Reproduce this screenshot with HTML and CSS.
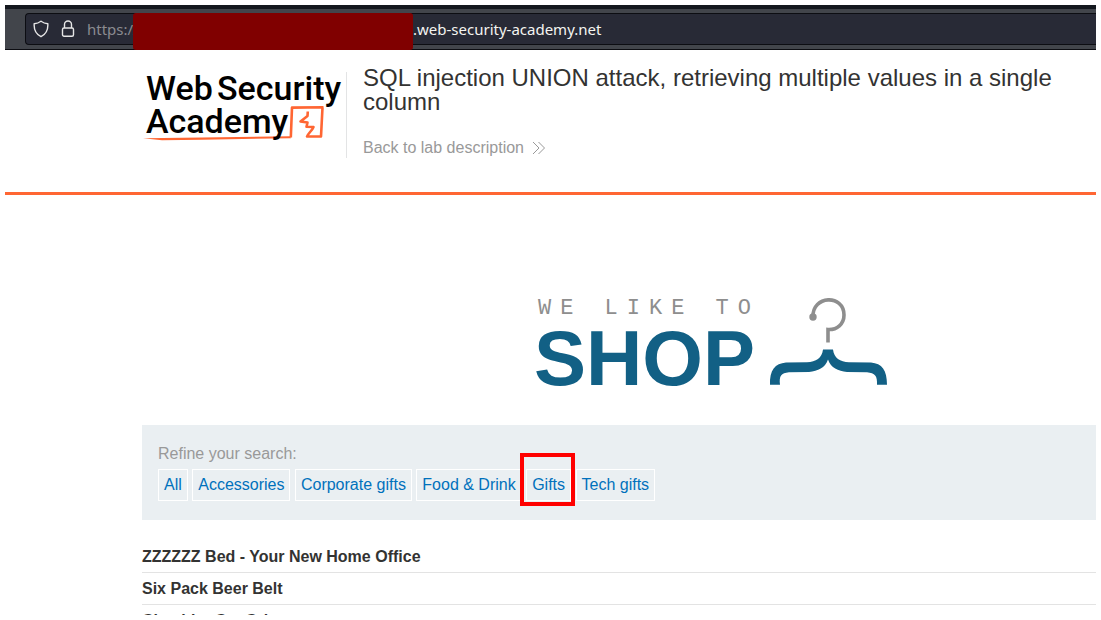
FILE: index.html
```html
<!DOCTYPE html>
<html lang="en">
<head>
<meta charset="utf-8">
<meta name="viewport" content="width=device-width, initial-scale=1">
<title>SQL injection UNION attack</title>
<link rel="stylesheet" href="styles.css">
</head>
<body>
<div class="screen">
  <div class="browser">
    <div class="address">
      <svg class="address-icon" width="16" height="18" viewBox="0 0 16 18" aria-hidden="true"><path d="M8 1.2 C10 2.6 12.3 3.5 14.8 3.8 C15.2 9.5 13 14.200 8 16.600 C3 14.200 .8 9.500 1.200 3.800 C3.700 3.500 6 2.600 8 1.200Z"/></svg>
      <svg class="address-icon" width="14" height="18" viewBox="0 0 14 18" aria-hidden="true"><rect x="1.500" y="8" width="11" height="8.300" rx="1.500"/><path d="M3.500 8V4.500a3.500 3.500 0 0 1 7 0V8"/></svg>
      <label class="scheme" for="url">https://</label>
      <input class="host" id="url" type="text" value=".web-security-academy.net">
      <div class="redaction"></div>
    </div>
  </div>

  <header class="lab-header">
    <div class="lab-row">
      <svg class="academy-logo" width="204" height="86" viewBox="0 0 204 86" role="img" aria-label="Web Security Academy">
        <text class="academy-text" x="4" y="28">Web</text>
        <text class="academy-text" x="75" y="28">Security</text>
        <path class="swipe" d="M1 66.200 L60 65.500 L148 64.200 L149 66.200 L60 67.800 L20 68.200Z"/>
        <path class="mark" d="M148.800 65.500 L150 35.600 L181.500 35.200 M180.500 35.500 L179 64.500 L165 64.500 C165.500 62 170 59 171.500 55 L164.500 54.800 L165.500 50.500 L158.500 49.500 L165.500 44 L165.800 39.500"/>
        <text class="academy-text" x="4" y="61">Academy</text>
      </svg>
      <div class="lab-title">
        <h1>SQL injection UNION attack, retrieving multiple values in a single column</h1>
        <a class="back" href="#">Back to lab description
          <svg width="14" height="14" viewBox="0 0 14 14" aria-hidden="true"><path d="M1 1l6 6-6 6M6.500 1l6 6-6 6"/></svg>
        </a>
      </div>
    </div>
  </header>

  <main class="shop">
    <svg class="shop-logo" width="352" height="92" viewBox="0 0 352 92" role="img" aria-label="We like to shop">
      <text class="shop-small" x="1" y="17">WE LIKE TO</text>
      <text class="shop-big" x="-3" y="88">SHOP</text>
      <circle cx="276" cy="20" r="3.700" fill="#8e8e8e"/>
      <path class="hook" d="M276 20 C275 -2 307 -3 307 18 C307 27 300 33 291 32.500 V45.500"/>
      <path class="hanger" d="M286 52.500 H296 C297 61 303 65 312 65.200 L334 65.500 C345 66.500 350 73 350 87.800 H340 C340.500 79 338 76 330 75.300 L310 75 C301 74 294 71 291 62.500 C288 71 281 74 272 75 L252 75.300 C244 76 242 79 243 87.800 H233 C232.500 73 238 66.500 249 65.500 L270 65.200 C279 65 285 61 286 52.500Z"/>
    </svg>

    <section class="filters">
      <p>Refine your search:</p>
      <nav class="filter-list">
        <a href="#">All</a>
        <a href="#">Accessories</a>
        <a href="#">Corporate gifts</a>
        <a href="#">Food &amp; Drink</a>
        <a class="marked" href="#">Gifts</a>
        <a href="#">Tech gifts</a>
      </nav>
    </section>

    <table class="products">
      <tbody>
        <tr><th scope="row">ZZZZZZ Bed - Your New Home Office</th></tr>
        <tr><th scope="row">Six Pack Beer Belt</th></tr>
        <tr><th scope="row">Cheshire Cat Grin</th></tr>
      </tbody>
    </table>
  </main>
</div>
</body>
</html>
```

FILE: styles.css
```css
* { box-sizing: border-box; }

body {
  margin: 0;
  padding: 5px;
  height: 100vh;
  overflow: hidden;
  background: #fff;
  color: #333332;
  font: 16px/20px "Liberation Sans", Arial, sans-serif;
}

.screen {
  height: 100%;
  overflow: hidden;
}

/* Browser toolbar */
.browser {
  padding: 4px 0 4px 20px;
  background: #42454b;
  border-top: 4px solid #14181e;
  border-bottom: 1px solid #0c0d12;
}

.address {
  position: relative;
  display: flex;
  align-items: center;
  height: 32px;
  padding-left: 7px;
  background: #282a36;
  border: 1px solid #0c0d12;
  border-right: 0;
  border-radius: 4px 0 0 4px;
  font: 15px/20px "Noto Sans", sans-serif;
}

.address-icon {
  flex: none;
  margin-right: 12px;
  fill: none;
  stroke: #e6e6e6;
  stroke-width: 1.4;
}

.scheme {
  width: 326px;
  color: #8b8b90;
}

.host {
  flex: 1;
  min-width: 0;
  padding: 0;
  border: 0;
  background: none;
  color: #f4f4f0;
  font: inherit;
}

.redaction {
  position: absolute;
  top: -1px;
  left: 107px;
  width: 280px;
  height: 37px;
  border-radius: 3px;
  background: #800000;
}

/* Lab header */
.lab-header {
  padding: 22px 0 34px 137px;
  border-bottom: 3px solid #ff6633;
}

.lab-row {
  display: flex;
}

.academy-logo {
  flex: none;
  overflow: visible;
}

.academy-text {
  font: 500 34px Roboto, sans-serif;
  fill: #000;
}

.swipe { fill: #ff6633; }

.mark {
  fill: none;
  stroke: #ff6633;
  stroke-width: 2.6;
  stroke-linejoin: round;
}

.lab-title {
  flex: 1;
  padding: 0 16px;
  border-left: 1px solid #e3e4e5;
}

h1 {
  margin: -6px 0 24px;
  font-size: 24px;
  font-weight: 400;
  line-height: 24px;
}

.back {
  display: flex;
  align-items: center;
  gap: 8px;
  color: #999;
  text-decoration: none;
}

.back svg {
  fill: none;
  stroke: #999;
}

/* Shop */
.shop {
  padding: 102px 0 0 137px;
}

.shop-logo {
  display: block;
  margin: 0 0 36px 41.4%;
  overflow: visible;
}

.shop-small {
  font: 22px "Liberation Mono", monospace;
  letter-spacing: 9px;
  fill: #8e8e8e;
}

.shop-big {
  font: 700 78px "Liberation Sans", Arial, sans-serif;
  fill: #126085;
}

.hook {
  fill: none;
  stroke: #8e8e8e;
  stroke-width: 3.6;
}

.hanger { fill: #126085; }

.filters {
  padding: 19px 16px;
  background: #eaeff2;
}

.filters p {
  margin: 0 0 5px;
  color: #999;
}

.filter-list a {
  position: relative;
  display: inline-block;
  padding: 5px;
  border: 1px solid #fff;
  color: #0071bc;
  text-decoration: none;
  vertical-align: top;
}

.marked::after {
  content: "";
  position: absolute;
  inset: -17px -5px -6px -7px;
  border: 4px solid #f00;
}

.products {
  width: 100%;
  margin-top: 21px;
  border-spacing: 0;
}

.products th {
  padding: 6px 0 5px;
  border-bottom: 1px solid #e3e3e3;
  text-align: left;
  font-weight: 700;
}
```
